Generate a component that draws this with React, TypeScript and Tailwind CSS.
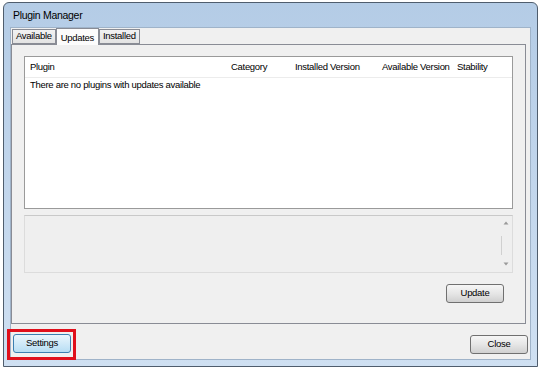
import React from 'react';

const columns = [
  { label: 'Plugin', w: 'w-[201px]' },
  { label: 'Category', w: 'w-[64px]' },
  { label: 'Installed Version', w: 'w-[87px]' },
  { label: 'Available Version', w: 'w-[75px]' },
  { label: 'Stability', w: 'flex-1' },
];

function Tab({ label, active }: { label: string; active?: boolean }) {
  if (active) {
    return (
      <div className="relative z-10 -mb-px flex h-[17px] items-start border border-b-0 border-[#898c95] bg-[#fcfcfc] px-[4px] pt-[2px] text-black">
        {label}
      </div>
    );
  }
  return (
    <div className="mt-[2px] flex h-[15px] items-center border border-[#898c95] bg-gradient-to-b from-[#f2f2f2] to-[#e3e3e3] px-[3px] text-black">
      {label}
    </div>
  );
}

function Button({ label, focused }: { label: string; focused?: boolean }) {
  return (
    <div
      className={
        'flex h-[19px] w-[58px] items-center justify-center rounded-[3px] border text-black ' +
        (focused
          ? 'border-[#3c7fb1] bg-gradient-to-b from-[#eaf6fd] to-[#b7ddf3]'
          : 'border-[#707070] bg-gradient-to-b from-[#f6f6f6] via-[#e6e6e6] to-[#d0d0d0]')
      }
    >
      {label}
    </div>
  );
}

export default function App() {
  return (
    <div
      className="h-[370px] w-[540px] overflow-hidden bg-white pl-[3px] pt-[2px] text-[9.5px] tracking-[-0.3px]"
      style={{ fontFamily: '"Liberation Sans", Arial, sans-serif' }}
    >
      {/* Window frame */}
      <div className="flex h-[365px] w-[535px] flex-col rounded-t-[6px] border border-[#4f5d6d] bg-gradient-to-b from-[#b4cce6] via-[#c2d6ec] to-[#cfe0f2]">
        {/* Title bar */}
        <div className="flex h-[24px] items-center pl-[9px] pt-[2px] text-[10.5px] text-black">Plugin Manager</div>

        {/* Client area */}
        <div className="mx-[6px] flex h-[333px] flex-col border border-[#9fb3c9] bg-[#f0f0f0]">
          {/* Tabs */}
          <div className="flex h-[16px] items-end pl-[1px]">
            <Tab label="Available" />
            <Tab label="Updates" active />
            <Tab label="Installed" />
          </div>

          {/* Tab panel */}
          <div className="mr-[4px] flex h-[280px] flex-col border border-[#898c95] bg-[#f0f0f0] px-[12px] pt-[11px]">
            {/* Plugin list */}
            <div className="h-[153px] border border-[#9a9a9a] bg-white">
              <div className="flex h-[21px] items-center whitespace-nowrap border-b border-[#ececec] text-black">
                {columns.map((c) => (
                  <div key={c.label} className={c.w + ' pl-[5px]'}>
                    {c.label}
                  </div>
                ))}
              </div>
              <div className="pl-[5px] text-black">There are no plugins with updates available</div>
            </div>

            {/* Description */}
            <div className="mt-[6px] h-[58px] border border-[#dcdcdc] border-t-[#c9c9c9] bg-[#efefef]">
              <div className="flex h-full flex-col items-end pr-[2px] pt-[4px]">
                <svg width="8" height="6" viewBox="0 0 8 6">
                  <path d="M4 1.5 L6.5 4.5 L1.5 4.5 Z" fill="#9a9a9a" />
                </svg>
                <div className="mr-[8px] mt-[10px] h-[19px] w-px bg-[#d0d0d0]" />
                <svg className="mt-[6px]" width="8" height="6" viewBox="0 0 8 6">
                  <path d="M1.5 1.5 L6.5 1.5 L4 4.5 Z" fill="#9a9a9a" />
                </svg>
              </div>
            </div>

            <div className="mt-[11px] flex justify-end pr-[9px]">
              <Button label="Update" />
            </div>
          </div>

          {/* Bottom buttons */}
          <div className="mt-[10px] flex items-start justify-between pl-[2px] pr-[2px]">
            <div className="relative">
              <Button label="Settings" focused />
              <div className="pointer-events-none absolute -left-[6px] -top-[5px] h-[31px] w-[69px] border-[3px] border-[#e0101c]" />
            </div>
            <div className="mt-[1px]">
              <Button label="Close" />
            </div>
          </div>
        </div>
      </div>
    </div>
  );
}
